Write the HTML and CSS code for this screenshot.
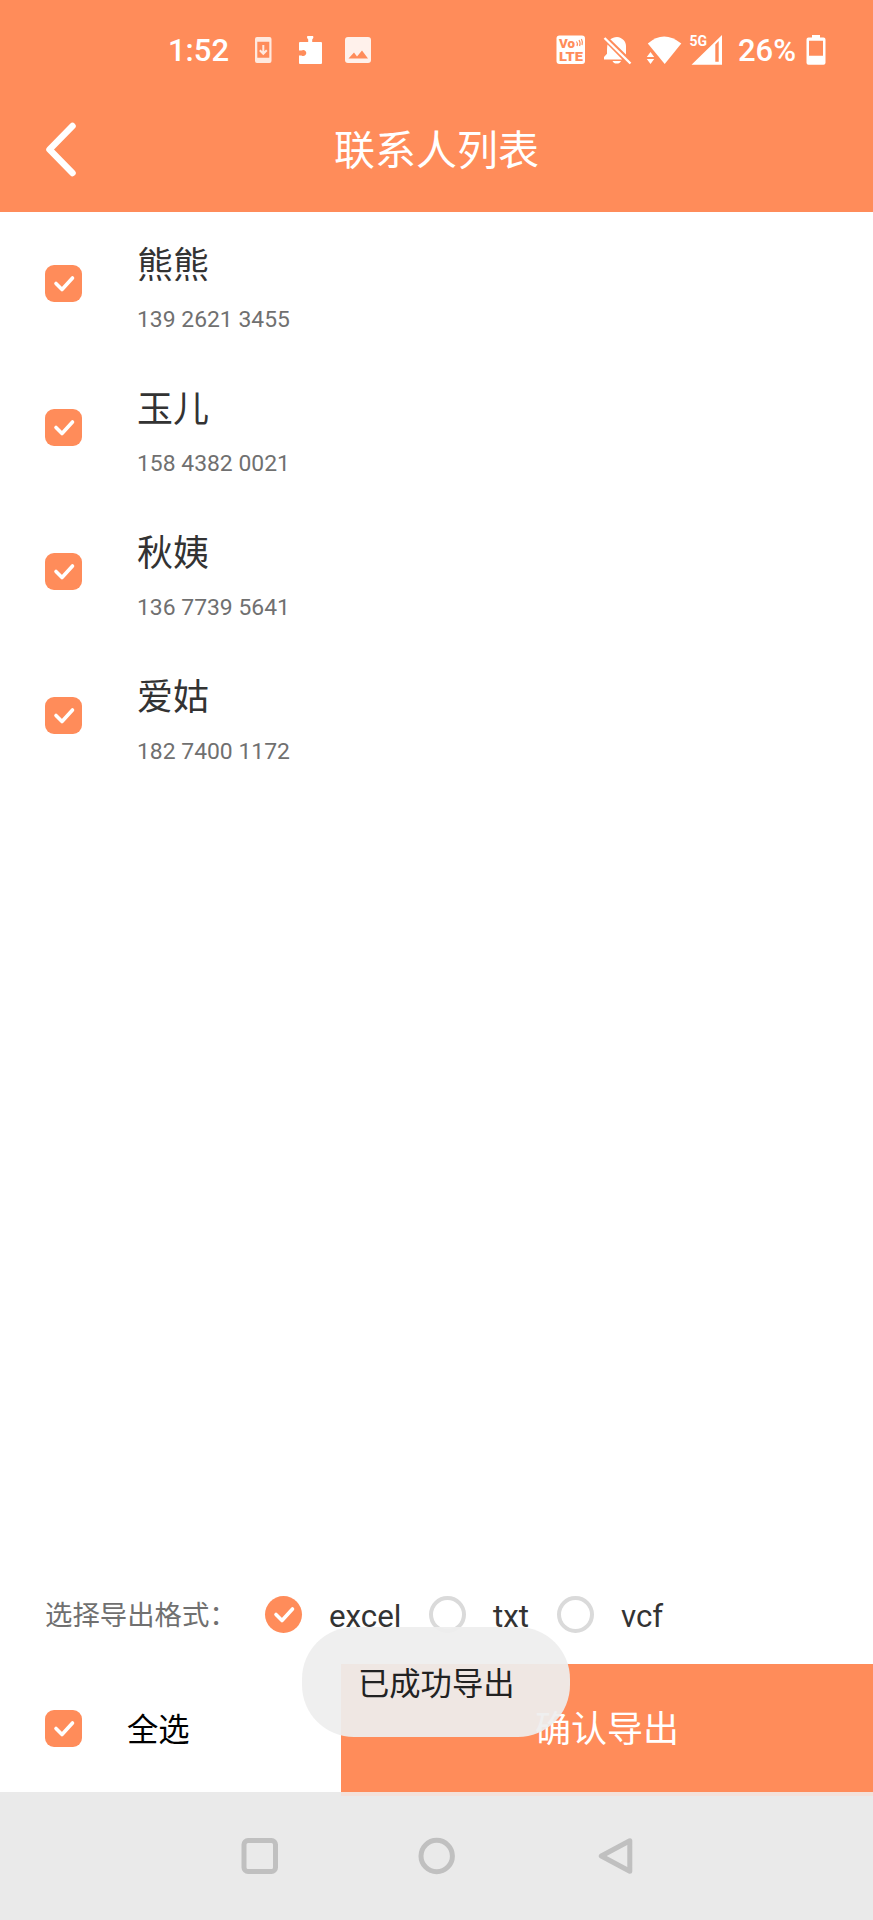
FILE: index.html
```html
<!DOCTYPE html>
<html lang="zh-CN">
<head>
  <meta charset="UTF-8" />
  <meta name="viewport" content="width=device-width, initial-scale=1.0"/>
  <title>联系人列表</title>
  <link rel="stylesheet" href="styles.css">
</head>
<body>

  <div class="app">
    <header class="header">
      <div class="status-bar">
        <span class="time">1:52</span>
        <svg class="status-left" width="120" height="30" viewBox="0 0 120 30">
          <!-- system update -->
          <path fill="#ffe9df" fill-rule="evenodd" d="M3 1h12.500a2 2 0 0 1 2 2v22a2 2 0 0 1-2 2H3a2 2 0 0 1-2-2V3a2 2 0 0 1 2-2zM3.300 5.800v16h12v-16z"/>
          <path fill="none" stroke="#ffe9df" stroke-width="2" d="M9.300 9v9M5.800 14.300l3.500 3.500 3.500-3.500"/>
          <!-- plugin -->
          <path fill="#fff" d="M46 6h8.200V3.500a3 3 0 1 1 4 0V6h8.800a1 1 0 0 1 1 1v20a1 1 0 0 1-1 1H46a1 1 0 0 1-1-1v-7.500h2.500a3 3 0 1 0 0-5H45V7a1 1 0 0 1 1-1z"/>
          <!-- picture -->
          <path fill="#fff1eb" fill-rule="evenodd" d="M94 1h20a3 3 0 0 1 3 3v20a3 3 0 0 1-3 3H94a3 3 0 0 1-3-3V4a3 3 0 0 1 3-3zM94.500 22.500h19.500l-6-8-5 6-3-4z"/>
        </svg>
        <svg class="status-right" width="170" height="32" viewBox="0 0 170 32">
          <rect x="0.500" y="0.500" width="28.500" height="28.500" rx="3" fill="#fff"/>
          <text x="3" y="13" class="volte" textLength="16" lengthAdjust="spacingAndGlyphs">Vo</text>
          <text x="3" y="26" class="volte" textLength="24" lengthAdjust="spacingAndGlyphs">LTE</text>
          <path fill="none" stroke="#ff8c5a" stroke-width="1.200" d="M20.500 6.500q1.600 2 .5 4.500M23 5q1.800 2.500.6 6M25.400 4q1.600 3 .6 6"/>
          <!-- muted bell -->
          <path fill="#fff" d="M61 2c5.500.5 9 4.500 9 9v8.500L54.300 4.300c1.700-1.300 4-2.200 6.700-2.300zM51.500 9.500 66.300 24.500H48v-2.500l3-3.200c0-4 0-6.500.5-9.300zM56.500 26h8.500c-1 3.400-7.500 3.400-8.500 0z"/>
          <path stroke="#fff" stroke-width="2.400" d="M48.500 3 74.500 28.500"/>
          <!-- wifi -->
          <path fill="#fff" d="M91.800 8.500q16-14 33.500 0L108.700 29z"/>
          <path fill="#fff" d="M90.800 22 94.500 17l3.700 5zM90.800 24l3.700 5 3.700-5z"/>
          <!-- mobile signal -->
          <text x="133.500" y="11" class="net">5G</text>
          <path fill="#fff" fill-rule="evenodd" d="M135.500 29.700H166V0zM159.300 9.500v17.200h3.400V6z"/>
        </svg>
        <span class="percent">26%</span>
        <svg class="battery" width="22" height="32" viewBox="0 0 22 32">
          <path fill="#fff" fill-rule="evenodd" d="M7 0h8v2.500h3.500a2 2 0 0 1 2 2V27.800a2 2 0 0 1-2 2h-15a2 2 0 0 1-2-2V4.500a2 2 0 0 1 2-2H7zM4 5.800v15h14v-15z"/>
        </svg>
      </div>
      <div class="title-bar">
        <svg class="back" width="32" height="56" viewBox="0 0 32 56">
          <path d="M27.500 4 4.500 27.500l23 23.500"/>
        </svg>
        <h1 class="title">联系人列表</h1>
      </div>
    </header>

    <main class="contacts">
      <div class="contact">
        <span class="box"><svg class="tick" viewBox="0 0 37 37"><path d="M11 18.500l6 6L27.500 13"/></svg></span>
        <div class="info">
          <div class="name">熊熊</div>
          <div class="phone">139 2621 3455</div>
        </div>
      </div>
      <div class="contact">
        <span class="box"><svg class="tick" viewBox="0 0 37 37"><path d="M11 18.500l6 6L27.500 13"/></svg></span>
        <div class="info">
          <div class="name">玉儿</div>
          <div class="phone">158 4382 0021</div>
        </div>
      </div>
      <div class="contact">
        <span class="box"><svg class="tick" viewBox="0 0 37 37"><path d="M11 18.500l6 6L27.500 13"/></svg></span>
        <div class="info">
          <div class="name">秋姨</div>
          <div class="phone">136 7739 5641</div>
        </div>
      </div>
      <div class="contact">
        <span class="box"><svg class="tick" viewBox="0 0 37 37"><path d="M11 18.500l6 6L27.500 13"/></svg></span>
        <div class="info">
          <div class="name">爱姑</div>
          <div class="phone">182 7400 1172</div>
        </div>
      </div>
    </main>

    <div class="formats">
      <span class="formats-label">选择导出格式：</span>
      <div class="format format-excel">
        <span class="box round"><svg class="tick" viewBox="0 0 37 37"><path d="M11 18.500l6 6L27.500 13"/></svg></span>
        <span class="format-name">excel</span>
      </div>
      <div class="format format-txt">
        <span class="radio"></span>
        <span class="format-name">txt</span>
      </div>
      <div class="format">
        <span class="radio"></span>
        <span class="format-name">vcf</span>
      </div>
    </div>

    <div class="actions">
      <div class="select-all">
        <span class="box"><svg class="tick" viewBox="0 0 37 37"><path d="M11 18.500l6 6L27.500 13"/></svg></span>
        <span class="select-text">全选</span>
      </div>
      <button class="confirm">确认导出</button>
    </div>

    <nav class="nav-bar">
      <svg width="38" height="38" viewBox="0 0 38 38"><rect x="3" y="3.500" width="31.500" height="31" rx="4"/></svg>
      <svg width="38" height="38" viewBox="0 0 38 38"><circle cx="18.700" cy="19" r="15.700"/></svg>
      <svg width="38" height="38" viewBox="0 0 38 38"><path d="M34.800 3.800v30.500L6.300 19z"/></svg>
    </nav>

    <div class="toast">已成功导出</div>
  </div>

</body>
</html>
```
FILE: styles.css
```css
* {
  box-sizing: border-box;
}

body {
  margin: 0;
  background: #fff;
  font-family: Roboto, 'Noto Sans CJK SC', sans-serif;
}

.app {
  position: relative;
  display: flex;
  flex-direction: column;
  width: 873px;
  height: 1920px;
}

.header {
  height: 212px;
  background: #ff8c5a;
  color: #fff;
}

.status-bar {
  display: flex;
  align-items: center;
  height: 102px;
  padding: 0 45px 0 168px;
  font-size: 31px;
  font-weight: 500;
}

.time,
.percent {
  padding-bottom: 2px;
}

.time {
  width: 86px;
}

.status-right {
  margin-left: 182px;
  overflow: visible;
}

.volte {
  font-size: 13px;
  font-weight: 900;
  fill: #ff8c5a;
}

.net {
  font-size: 14px;
  font-weight: 700;
  fill: #fff;
}

.percent {
  width: 58px;
  margin-left: 12px;
}

.battery {
  margin-left: 9px;
}

.title-bar {
  display: grid;
  grid-template-columns: 32px 1fr 32px;
  align-items: center;
  height: 96px;
  padding: 0 45px;
}

.back path {
  fill: none;
  stroke: #fff;
  stroke-width: 6.500;
  stroke-linecap: round;
  stroke-linejoin: round;
}

.title {
  margin: 0;
  padding-top: 1px;
  font-size: 41px;
  font-weight: 400;
  line-height: 60px;
  text-align: center;
}

.contacts {
  flex: 1;
}

.contact {
  display: flex;
  align-items: center;
  gap: 55px;
  height: 143.800px;
  padding-left: 45px;
}

.box {
  display: block;
  flex: none;
  width: 37px;
  height: 37px;
  border-radius: 9px;
  background: #ff8c5a;
}

.box.round {
  border-radius: 50%;
}

.tick {
  display: block;
  fill: none;
  stroke: #fff;
  stroke-width: 3.600;
  stroke-linecap: round;
  stroke-linejoin: round;
}

.info {
  padding-top: 19px;
}

.name {
  color: #333;
  font-size: 36px;
  line-height: 54px;
}

.phone {
  color: #707070;
  font-size: 22.900px;
  line-height: 54px;
}

.formats {
  display: flex;
  align-items: center;
  height: 100px;
  padding-left: 45px;
  color: #333;
  font-size: 31.300px;
}

.formats-label {
  width: 220px;
  padding-bottom: 2px;
  color: #707070;
  font-size: 27.400px;
}

.format {
  display: flex;
  align-items: center;
  gap: 27px;
}

.format-excel {
  width: 164px;
}

.format-txt {
  width: 128px;
}

.format-name {
  padding-top: 4px;
}

.radio {
  width: 37px;
  height: 37px;
  border: 4.500px solid #dadada;
  border-radius: 50%;
}

.actions {
  display: flex;
  height: 128px;
}

.select-all {
  display: flex;
  align-items: center;
  gap: 45px;
  width: 341px;
  padding-left: 45px;
  color: #000;
  font-size: 31.300px;
}

.select-text {
  padding-bottom: 2px;
}

.confirm {
  position: relative;
  flex: 1;
  padding: 0 0 4px;
  border: none;
  background: #ff8c5a;
  box-shadow: 0 4px #f3e1da;
  color: #fff;
  font-family: inherit;
  font-size: 36px;
}

.nav-bar {
  display: flex;
  justify-content: center;
  gap: 139px;
  height: 128px;
  padding-top: 45px;
  background: #eaeaea;
}

.nav-bar svg {
  fill: none;
  stroke: #c0c0c0;
  stroke-width: 5;
  stroke-linejoin: round;
}

.toast {
  position: absolute;
  left: 302px;
  bottom: 183px;
  width: 268px;
  height: 110px;
  padding-left: 56px;
  border-radius: 52px;
  background: rgba(238, 238, 238, 0.93);
  color: #222;
  font-size: 31.300px;
  line-height: 115px;
}
```
